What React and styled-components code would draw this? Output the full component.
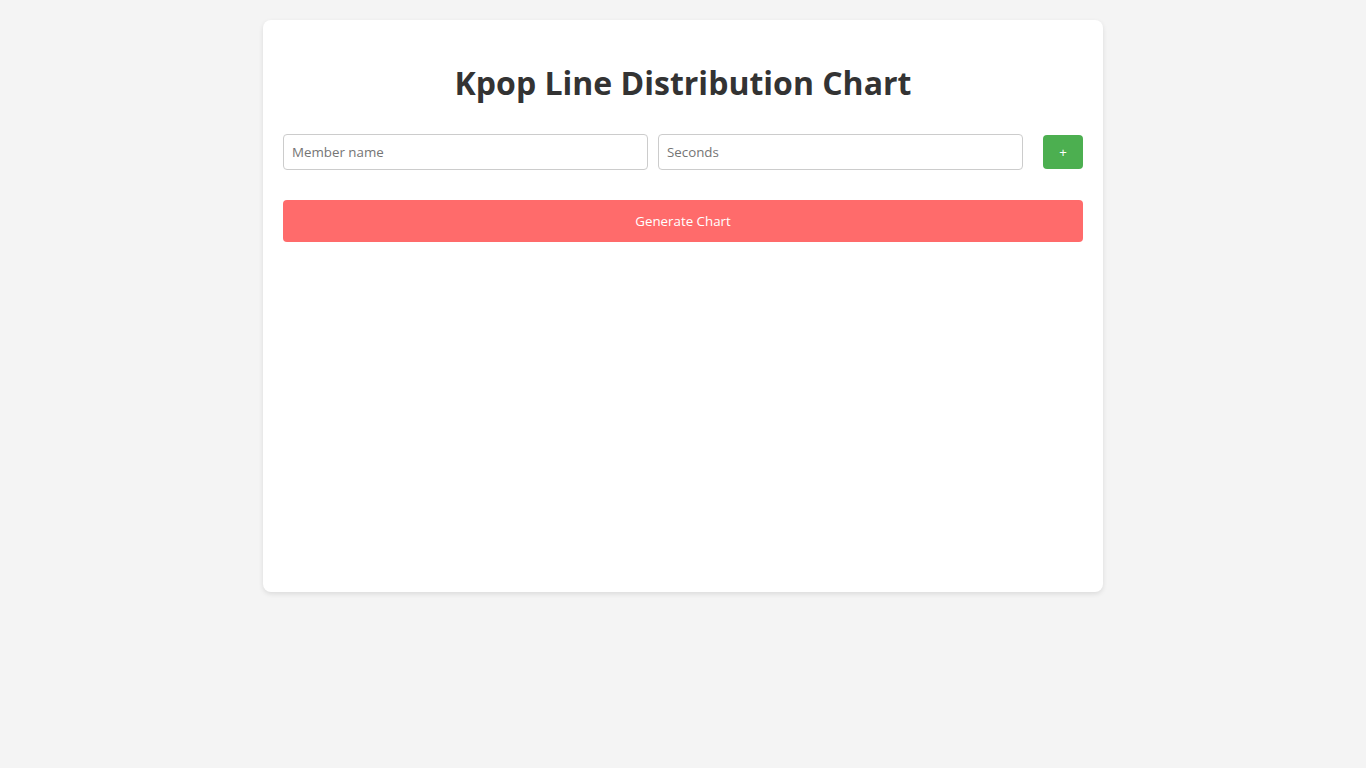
import React, { useState } from "react";
import styled, { createGlobalStyle } from "styled-components";

const Global = createGlobalStyle`
  * { box-sizing: border-box; }
  body {
    margin: 0;
    padding: 20px;
    background: #f4f4f4;
    font-family: "Open Sans", "Liberation Sans", sans-serif;
    color: #333;
  }
`;

const Card = styled.div`
  width: 840px;
  margin: 0 auto;
  background: #fff;
  padding: 20px;
  border-radius: 8px;
  box-shadow: 0 2px 5px rgba(0, 0, 0, 0.1);
`;

const Title = styled.h1`
  margin: 21px 0 29px;
  text-align: center;
  font-size: 32px;
  font-weight: 700;
  line-height: 44px;
  color: #333;
`;

const Row = styled.div`
  display: flex;
  align-items: center;
`;

const Input = styled.input`
  flex: 1;
  height: 36px;
  margin-right: 10px;
  padding: 8px;
  font-family: inherit;
  font-size: 13.333px;
  color: #333;
  border: 1px solid #ccc;
  border-radius: 4px;
  outline: none;
  &::placeholder { color: #757575; }
`;

const AddButton = styled.button`
  width: 40px;
  height: 34px;
  margin-left: 10px;
  border: none;
  border-radius: 4px;
  background: #4caf50;
  color: #fff;
  font-family: inherit;
  font-size: 13.333px;
  cursor: pointer;
`;

const GenerateButton = styled.button`
  display: block;
  width: 100%;
  height: 42px;
  margin-top: 30px;
  border: none;
  border-radius: 4px;
  background: #ff6b6b;
  color: #fff;
  font-family: inherit;
  font-size: 13.333px;
  cursor: pointer;
`;

const ChartArea = styled.div`
  height: 330px;
`;

export default function App() {
  const [name, setName] = useState("");
  const [secs, setSecs] = useState("");
  return (
    <>
      <Global />
      <Card>
        <Title>Kpop Line Distribution Chart</Title>
        <Row>
          <Input placeholder="Member name" value={name} onChange={(e) => setName(e.target.value)} />
          <Input placeholder="Seconds" type="number" value={secs} onChange={(e) => setSecs(e.target.value)} />
          <AddButton>+</AddButton>
        </Row>
        <GenerateButton>Generate Chart</GenerateButton>
        <ChartArea />
      </Card>
    </>
  );
}
